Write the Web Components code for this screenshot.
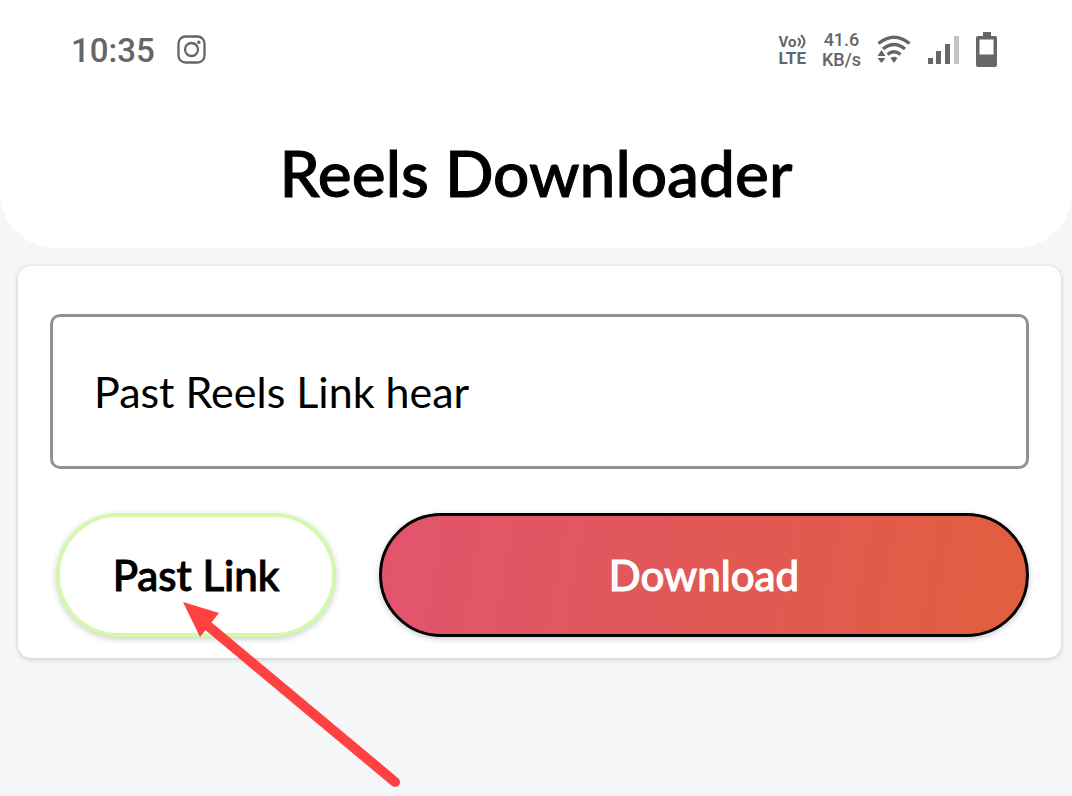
<!DOCTYPE html>
<html lang="en">
<head>
<meta charset="utf-8">
<meta name="viewport" content="width=device-width, initial-scale=1">
<title>Reels Downloader</title>
<style>
  html { background: #f5f6f8; }
  body { margin: 0; min-height: 100vh; font-family: Lato, "Open Sans", sans-serif; color: #000; }
</style>
</head>
<body>
<reels-app></reels-app>
<script>
const define = (name, html, setup) => customElements.define(name, class extends HTMLElement {
  constructor() {
    super();
    this.attachShadow({ mode: "open" }).innerHTML = html;
    if (setup) setup(this);
  }
});

define("status-bar", `
  <style>
    :host { display: flex; justify-content: space-between; align-items: center; height: 99px; padding: 0 73px 0 71px; color: #666; font-family: Roboto, sans-serif; font-weight: 500; }
    .left, .right { display: flex; align-items: center; }
    .left { gap: 22px; }
    .right { gap: 16px; }
    time { font-size: 33px; line-height: 42px; padding-top: 2px; }
    .volte { font-weight: 700; font-size: 17px; line-height: 16px; }
    .volte .vo { display: flex; align-items: center; font-size: 15px; }
    .volte span { display: block; }
    .speed { font-size: 18px; line-height: 20px; text-align: center; }
    .speed span { display: block; }
    svg { display: block; }
  </style>
  <div class="left">
    <time>10:35</time>
    <svg width="29" height="29" viewBox="0 0 29 29" fill="none" stroke="#666" stroke-width="2.3" aria-label="Instagram">
      <rect x="1.5" y="1.5" width="26" height="26" rx="7"/><circle cx="14.5" cy="14.5" r="6.5"/><circle cx="21.800" cy="7.200" r="1.700" fill="#666" stroke="none"/>
    </svg>
  </div>
  <div class="right">
    <div class="volte">
      <div class="vo"><span>Vo</span><svg width="9" height="16" viewBox="0 0 9 16" fill="none" stroke="#666" stroke-width="2"><path d="M1 4Q5 8 1 12M4 1Q11 8 4 14"/></svg></div>
      <span>LTE</span>
    </div>
    <div class="speed"><span>41.6</span><span>KB/s</span></div>
    <svg width="34" height="30" viewBox="0 0 34 30" fill="none" stroke="#666" stroke-width="3.4" aria-label="Wi-Fi">
      <path d="M1.500 8.500Q17 -4 32.500 8.500M6 14Q17 5 28 14M10.500 19.500Q17 14 23.500 19.500"/>
      <path d="M4.500 15l4 6h-8zM.5 23h8l-4 5zM13.500 23q4-2.500 7 0l-3.500 5z" fill="#666" stroke="none"/>
    </svg>
    <svg width="32" height="30" viewBox="0 0 32 30" fill="#666" aria-label="Signal">
      <rect x="1" y="23" width="5" height="6"/><rect x="9" y="16" width="5" height="13"/><rect x="18" y="9" width="5" height="20"/><rect x="27" y="1" width="5" height="28" fill="#c4c4c4"/>
    </svg>
    <svg width="24" height="36" viewBox="0 0 24 36" aria-label="Battery">
      <path d="M8 0h8v4h4q2 0 2 2v27q0 2-2 2H3q-2 0-2-2V6q0-2 2-2h5zM4.500 7.500v15h14v-15z" fill="#666" fill-rule="evenodd"/>
    </svg>
  </div>`);

define("app-header", `
  <style>
    :host { display: block; background: #fff; border-radius: 0 0 56px 56px; }
    h1 { margin: 0; padding: 34px 0 35px; text-align: center; font-size: 64px; line-height: 80px; font-weight: 500; -webkit-text-stroke: 1px; }
  </style>
  <status-bar></status-bar>
  <h1><slot></slot></h1>`);

define("pill-button", `
  <style>
    :host { display: block; }
    button { display: block; width: 100%; height: 124px; padding: 0; border: 4px solid #d4f8ad; border-radius: 62px; background: #fff; color: #000; font: inherit; font-size: 42px; line-height: 52px; font-weight: 500; -webkit-text-stroke: 1px; box-shadow: 0 2px 6px #0003; }
    :host([primary]) button { border: 3px solid #000; color: #fff; background: linear-gradient(100deg, #e2546e, #e15856 50%, #e25e3d) border-box; }
  </style>
  <button type="button"><slot></slot></button>`);

define("pointer-arrow", `
  <style>
    :host { display: block; pointer-events: none; }
    svg { display: block; }
  </style>
  <svg width="224" height="194" viewBox="0 0 224 194" aria-hidden="true">
    <path d="M27 25L215 182" stroke="#ff4141" stroke-width="10" stroke-linecap="round"/>
    <path d="M3 2L39 13L20 37Z" fill="#ff4141"/>
  </svg>`);

define("link-field", `
  <style>
    :host { display: block; }
    input { display: block; box-sizing: border-box; width: 100%; height: 155px; padding: 0 41px; border: 3px solid #929292; border-radius: 10px; background: #fff; color: #000; font: inherit; font-size: 43px; outline: 0; }
    input::placeholder { color: #000; opacity: 1; }
  </style>
  <input type="url" aria-label="Reels link">`,
  el => { el.shadowRoot.querySelector("input").placeholder = "Past Reels Link hear"; });

define("download-card", `
  <style>
    :host { display: block; margin: 18px 11px 0 18px; padding: 48px 32px 21px; border-radius: 13px; background: #fff; box-shadow: 0 1px 5px #0003; }
    .actions { display: grid; grid-template-columns: 280px 1fr; gap: 43px; margin: 44px 0 0 6px; }
    .paste { position: relative; }
    pointer-arrow { position: absolute; left: 124px; top: 87px; z-index: 1; }
  </style>
  <link-field></link-field>
  <div class="actions">
    <div class="paste"><pill-button>Past Link</pill-button><pointer-arrow></pointer-arrow></div>
    <pill-button primary>Download</pill-button>
  </div>`);

define("reels-app", `
  <style>:host { display: flow-root; }</style>
  <app-header>Reels Downloader</app-header>
  <main><download-card></download-card></main>`);
</script>
</body>
</html>
